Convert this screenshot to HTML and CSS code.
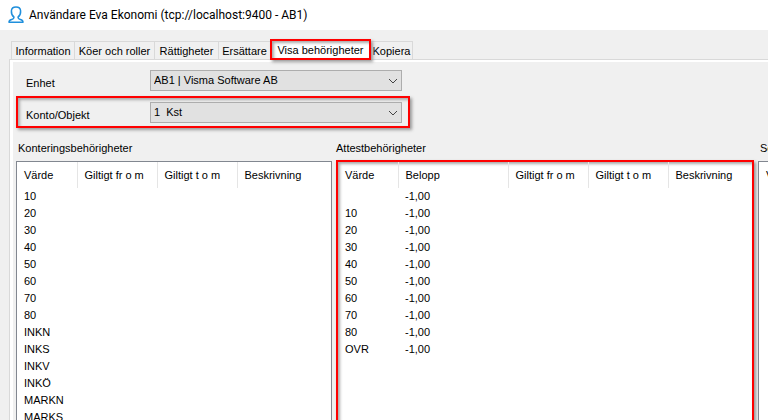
FILE: index.html
```html
<!DOCTYPE html>
<html lang="sv">
<head>
  <meta charset="UTF-8">
  <meta name="viewport" content="width=device-width, initial-scale=1.0">
  <title>Användare Eva Ekonomi</title>
  <link rel="stylesheet" href="styles.css">
</head>
<body>

  <header class="titlebar">
    <svg class="user-icon" width="16" height="18" viewBox="0 0 16 18" fill="none" stroke="#1f8fdc" stroke-width="1.5" stroke-linejoin="round" stroke-linecap="round">
      <path d="M6 11.2C4 9.6 3.2 7.2 3.4 4.8C3.6 2.4 5.4 1 8 1s4.400 1.400 4.600 3.800C12.800 7.200 12 9.600 10 11.200C10 12.800 10.800 13 12.400 13.500C14.300 14.100 15 14.700 15 16.200H1C1 14.700 1.700 14.100 3.600 13.500C5.200 13 6 12.800 6 11.200Z"/>
    </svg>
    <h1>Användare Eva Ekonomi (tcp://localhost:9400 - AB1)</h1>
  </header>

  <nav class="tabs">
    <button class="tab tab-info">Information</button>
    <button class="tab tab-queues">Köer och roller</button>
    <button class="tab tab-rights">Rättigheter</button>
    <button class="tab tab-deputy">Ersättare</button>
    <button class="tab active marked">Visa behörigheter</button>
    <button class="tab tab-copy">Kopiera</button>
  </nav>

  <main class="panel">
    <div class="fields">
      <div class="field">
        <label for="enhet">Enhet</label>
        <div class="dropdown">
          <select id="enhet"><option>AB1 | Visma Software AB</option></select>
          <svg class="chevron" width="10" height="6" viewBox="0 0 10 6" fill="none" stroke="#444"><path d="M1 1l4 4 4-4"/></svg>
        </div>
      </div>
      <div class="field marked">
        <label for="konto">Konto/Objekt</label>
        <div class="dropdown">
          <select id="konto"><option>1 &nbsp;Kst</option></select>
          <svg class="chevron" width="10" height="6" viewBox="0 0 10 6" fill="none" stroke="#444"><path d="M1 1l4 4 4-4"/></svg>
        </div>
      </div>
    </div>

    <div class="lists">
      <section class="list list-kontering">
        <h2>Konteringsbehörigheter</h2>
        <div class="box">
          <table>
            <colgroup><col class="c-value"><col class="c-date"><col class="c-date"><col></colgroup>
            <thead>
              <tr><th>Värde</th><th>Giltigt fr o m</th><th>Giltigt t o m</th><th>Beskrivning</th></tr>
            </thead>
            <tbody>
              <tr><td>10</td><td></td><td></td><td></td></tr>
              <tr><td>20</td><td></td><td></td><td></td></tr>
              <tr><td>30</td><td></td><td></td><td></td></tr>
              <tr><td>40</td><td></td><td></td><td></td></tr>
              <tr><td>50</td><td></td><td></td><td></td></tr>
              <tr><td>60</td><td></td><td></td><td></td></tr>
              <tr><td>70</td><td></td><td></td><td></td></tr>
              <tr><td>80</td><td></td><td></td><td></td></tr>
              <tr><td>INKN</td><td></td><td></td><td></td></tr>
              <tr><td>INKS</td><td></td><td></td><td></td></tr>
              <tr><td>INKV</td><td></td><td></td><td></td></tr>
              <tr><td>INKÖ</td><td></td><td></td><td></td></tr>
              <tr><td>MARKN</td><td></td><td></td><td></td></tr>
              <tr><td>MARKS</td><td></td><td></td><td></td></tr>
            </tbody>
          </table>
        </div>
      </section>

      <section class="list list-attest">
        <h2>Attestbehörigheter</h2>
        <div class="box marked">
          <table>
            <colgroup><col class="c-value"><col class="c-amount"><col class="c-date"><col class="c-date"><col></colgroup>
            <thead>
              <tr><th>Värde</th><th>Belopp</th><th>Giltigt fr o m</th><th>Giltigt t o m</th><th>Beskrivning</th></tr>
            </thead>
            <tbody>
              <tr><td></td><td>-1,00</td><td></td><td></td><td></td></tr>
              <tr><td>10</td><td>-1,00</td><td></td><td></td><td></td></tr>
              <tr><td>20</td><td>-1,00</td><td></td><td></td><td></td></tr>
              <tr><td>30</td><td>-1,00</td><td></td><td></td><td></td></tr>
              <tr><td>40</td><td>-1,00</td><td></td><td></td><td></td></tr>
              <tr><td>50</td><td>-1,00</td><td></td><td></td><td></td></tr>
              <tr><td>60</td><td>-1,00</td><td></td><td></td><td></td></tr>
              <tr><td>70</td><td>-1,00</td><td></td><td></td><td></td></tr>
              <tr><td>80</td><td>-1,00</td><td></td><td></td><td></td></tr>
              <tr><td>OVR</td><td>-1,00</td><td></td><td></td><td></td></tr>
            </tbody>
          </table>
        </div>
      </section>

      <section class="list list-more">
        <h2>Se</h2>
        <div class="box">
          <table>
            <thead>
              <tr><th>Värde</th></tr>
            </thead>
          </table>
        </div>
      </section>
    </div>
  </main>

</body>
</html>
```
FILE: styles.css
```css
* {
  box-sizing: border-box;
}
body {
  font-family: "Liberation Sans", Arial, sans-serif;
  font-size: 11px;
  margin: 0;
  height: 100vh;
  overflow: hidden;
  display: flex;
  flex-direction: column;
  background-color: #f0f0f0;
  color: #000;
}
.titlebar {
  display: flex;
  align-items: center;
  flex: none;
  gap: 5px;
  height: 30px;
  padding-left: 8px;
  background-color: #fff;
}
.titlebar h1 {
  margin: 0;
  font-family: Roboto, "Open Sans", sans-serif;
  font-size: 12px;
  font-weight: normal;
}

/* red frame around the parts to look at */
.marked {
  border: 2px solid #f00;
  box-shadow: 2px 2px 3px #999, inset 2px 2px 3px #aaa;
}

.tabs {
  display: flex;
  align-items: flex-end;
  flex: none;
  height: 29px;
  padding-left: 11px;
}
.tab {
  height: 18px;
  padding: 0;
  border: 1px solid #d9d9d9;
  border-bottom: none;
  border-right: none;
  background-color: #f0f0f0;
  font: inherit;
  color: #000;
  white-space: nowrap;
}
.tab-info {
  width: 63px;
}
.tab-queues {
  width: 80px;
}
.tab-rights {
  width: 64px;
}
.tab-deputy {
  width: 52px;
}
.tab-copy {
  width: 42px;
  border-left: none;
  border-right: 1px solid #d9d9d9;
}
.tab.active {
  position: relative;
  width: 101px;
  height: 21px;
  margin-bottom: -1px;
  border: 2px solid #f00;
  background-color: #fff;
}

.panel {
  flex: 1;
  min-height: 0;
  margin-left: 9px;
  padding: 8px 0 0 3px;
  border-top: 1px solid #d9d9d9;
  border-left: 1px solid #d9d9d9;
  box-shadow: inset 3px 2px 0 #fff;
}
.fields {
  width: 394px;
  margin-left: 3px;
}
.field {
  display: flex;
  align-items: center;
  height: 32px;
  padding: 0 6px 0 8px;
  border: 2px solid transparent;
}
.field:first-child {
  height: 28px;
  padding-bottom: 4px;
}
.field.marked {
  border-color: #f00;
}
.field label {
  width: 124px;
  padding-top: 5px;
}
.dropdown {
  position: relative;
  flex: 1;
}
.dropdown select {
  appearance: none;
  display: block;
  width: 100%;
  height: 21px;
  padding: 0 20px 0 3px;
  border: 1px solid #adadad;
  border-radius: 0;
  background-color: #e1e1e1;
  font: inherit;
  color: #000;
}
.chevron {
  position: absolute;
  right: 4px;
  top: 8px;
  pointer-events: none;
}

.lists {
  display: flex;
  gap: 4px;
  margin: 12px 0 0 3px;
}
.list {
  flex: none;
}
.list h2 {
  margin: 0;
  padding-left: 2px;
  font-size: 11px;
  font-weight: normal;
  line-height: 16px;
}
.list-kontering {
  width: 316px;
}
.list-attest,
.list-more {
  width: 418px;
}
.list-attest h2 {
  padding-left: 0;
}
.box {
  height: 320px;
  margin-top: 5px;
  border: 1px solid #828790;
  background-color: #fff;
}
.box.marked {
  margin-top: 4px;
  border: 2px solid #f00;
}
table {
  width: 100%;
  table-layout: fixed;
  border-collapse: collapse;
}
.c-value {
  width: 60px;
}
.c-date {
  width: 80px;
}
.c-amount {
  width: 110px;
}
th,
td {
  padding: 0 0 0 7px;
  text-align: left;
  font-weight: normal;
  white-space: nowrap;
}
th {
  height: 26px;
  border-right: 1px solid #e5e5e5;
}
th:last-child {
  border-right: none;
}
td {
  height: 17px;
  line-height: 17px;
}
```
